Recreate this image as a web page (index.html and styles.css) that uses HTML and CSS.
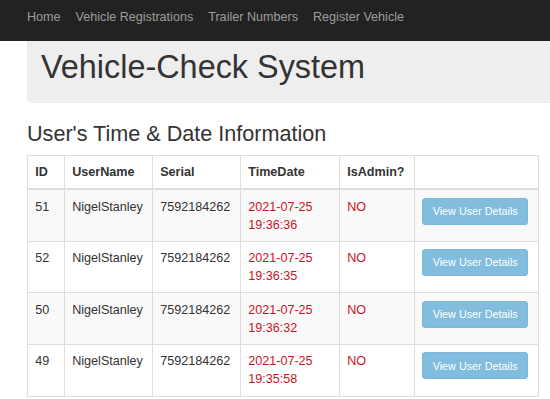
FILE: index.html
```html
<!DOCTYPE html>
<html lang="en">
<head>
<meta charset="utf-8">
<title>Vehicle-Check System</title>
<link rel="stylesheet" href="styles.css">
</head>
<body>
<nav class="navbar">
  <a class="nav-link" href="#">Home</a>
  <a class="nav-link" href="#">Vehicle Registrations</a>
  <a class="nav-link" href="#">Trailer Numbers</a>
  <a class="nav-link" href="#">Register Vehicle</a>
</nav>
<main class="container">
  <div class="jumbotron">
    <h1 class="title">Vehicle-Check System</h1>
  </div>
  <h3 class="section-title">User's Time &amp; Date Information</h3>
  <table class="data-table">
    <colgroup>
      <col class="c-id"><col class="c-user"><col class="c-serial"><col class="c-time"><col class="c-admin"><col class="c-action">
    </colgroup>
    <thead>
      <tr><th>ID</th><th>UserName</th><th>Serial</th><th>TimeDate</th><th>IsAdmin?</th><th></th></tr>
    </thead>
    <tbody>
      <tr class="striped"><td>51</td><td>NigelStanley</td><td>7592184262</td><td class="danger">2021-07-25 19:36:36</td><td class="danger">NO</td><td><button class="btn-view" disabled>View User Details</button></td></tr>
      <tr><td>52</td><td>NigelStanley</td><td>7592184262</td><td class="danger">2021-07-25 19:36:35</td><td class="danger">NO</td><td><button class="btn-view" disabled>View User Details</button></td></tr>
      <tr class="striped"><td>50</td><td>NigelStanley</td><td>7592184262</td><td class="danger">2021-07-25 19:36:32</td><td class="danger">NO</td><td><button class="btn-view" disabled>View User Details</button></td></tr>
      <tr><td>49</td><td>NigelStanley</td><td>7592184262</td><td class="danger">2021-07-25 19:35:58</td><td class="danger">NO</td><td><button class="btn-view" disabled>View User Details</button></td></tr>
    </tbody>
  </table>
</main>
</body>
</html>
```

FILE: styles.css
```css
html, body {
  margin: 0;
  padding: 0;
  background: #fff;
}
body {
  font-family: "Liberation Sans", Arial, sans-serif;
  font-size: 12.6px;
  line-height: 18px;
  color: #333;
  overflow: hidden;
}
.navbar {
  height: 41px;
  box-sizing: border-box;
  background: #222;
  padding: 8px 0 0 27px;
  display: flex;
  gap: 15px;
}
.nav-link {
  color: #9d9d9d;
  text-decoration: none;
  font-size: 12.6px;
  line-height: 18px;
}
.container {
  padding-left: 27px;
}
.jumbotron {
  background: #eee;
  border-radius: 0 0 0 5px;
  padding: 9px 0 0 14px;
  height: 62px;
  box-sizing: border-box;
}
.title {
  margin: 0;
  font-size: 32.4px;
  line-height: 35.6px;
  font-weight: 500;
  color: #333;
}
.section-title {
  margin: 19px 0 9.2px;
  font-size: 21.6px;
  line-height: 23.8px;
  font-weight: 500;
  color: #333;
}
.data-table {
  border-collapse: collapse;
  table-layout: fixed;
  width: 511px;
}
.c-id { width: 37px; }
.c-user { width: 88px; }
.c-serial { width: 88px; }
.c-time { width: 99px; }
.c-admin { width: 75px; }
.c-action { width: 124px; }
.data-table th,
.data-table td {
  border: 1px solid #ddd;
  padding: 7.2px;
  text-align: left;
  vertical-align: top;
  line-height: 18px;
}
.data-table th {
  font-weight: bold;
  border-bottom: 2px solid #ddd;
}
.data-table tbody tr {
  height: 51.6px;
}
.striped {
  background: #f9f9f9;
}
.danger {
  color: #c9141e;
}
.btn-view {
  display: inline-block;
  font-family: "Liberation Sans", Arial, sans-serif;
  font-size: 10.8px;
  line-height: 16.2px;
  padding: 4.5px 9.5px;
  color: #fff;
  background: #82bddd;
  border: 1px solid #78b8da;
  border-radius: 3px;
  cursor: not-allowed;
}
```
